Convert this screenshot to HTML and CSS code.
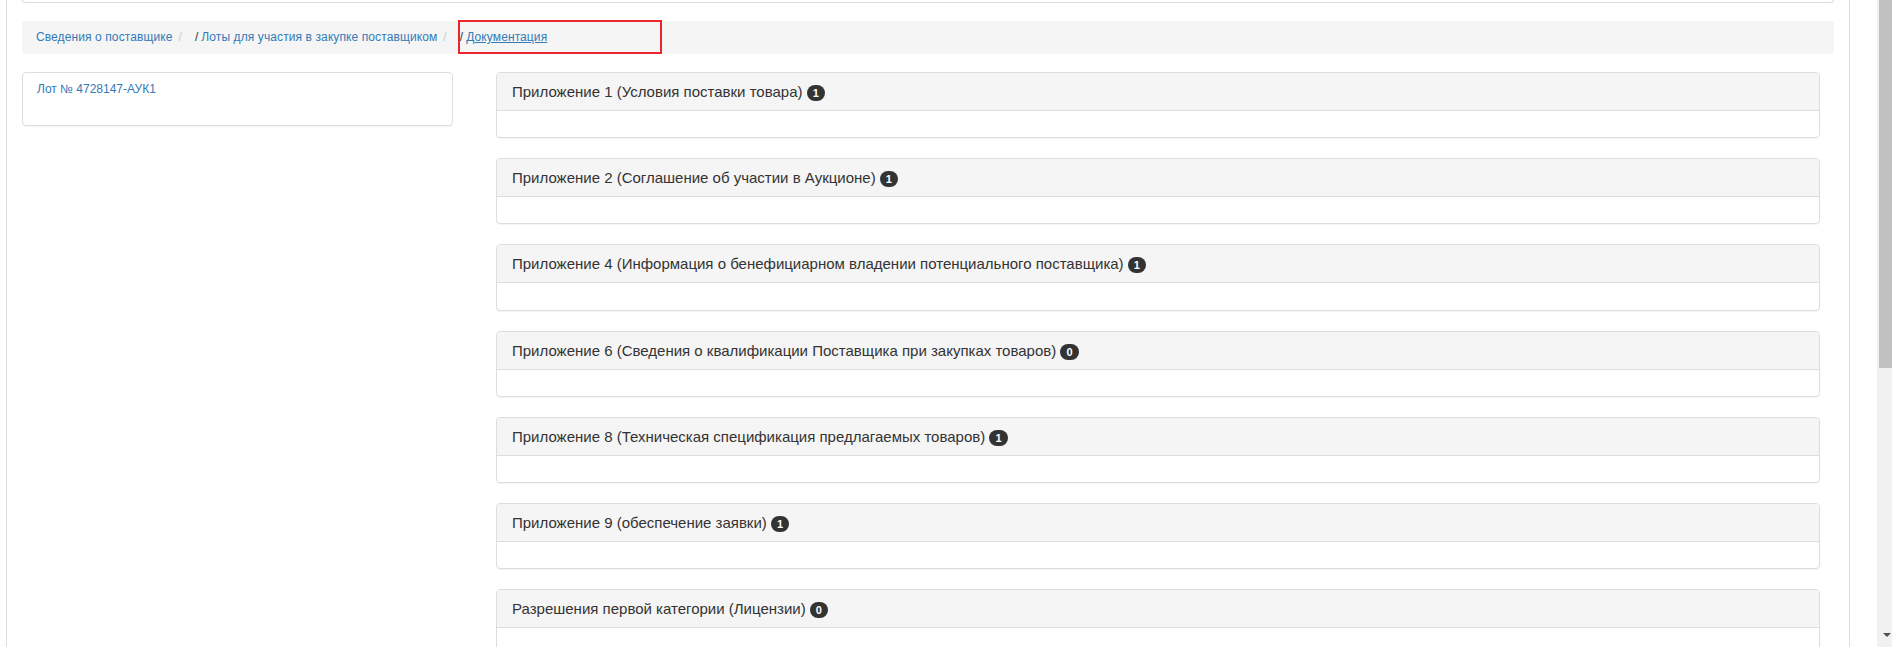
FILE: index.html
```html
<!DOCTYPE html>
<html lang="ru">
<head>
<meta charset="utf-8">
<title>Документация</title>
<link rel="stylesheet" href="styles.css">
</head>
<body>
<div class="page">
  <main class="viewport">
    <div class="container">
      <div class="top-card"></div>
      <nav class="breadcrumb">
        <a class="crumb-link" href="#">Сведения о поставщике</a>
        <span class="crumb-sep">/</span>
        <span class="crumb-slash">/</span>
        <a class="crumb-link" href="#">Лоты для участия в закупке поставщиком</a>
        <span class="crumb-sep">/</span>
        <span class="crumb-slash">/</span>
        <a class="crumb-link crumb-current" href="#">Документация</a>
        <span class="highlight"></span>
      </nav>
      <div class="row">
        <aside class="col-left">
          <div class="lot-card"><a class="lot-link" href="#">Лот № 4728147-АУК1</a></div>
        </aside>
        <section class="col-right">
          <div class="panel">
            <div class="panel-heading">Приложение 1 (Условия поставки товара) <span class="badge">1</span></div>
            <div class="panel-body"></div>
          </div>
          <div class="panel">
            <div class="panel-heading">Приложение 2 (Соглашение об участии в Аукционе) <span class="badge">1</span></div>
            <div class="panel-body"></div>
          </div>
          <div class="panel">
            <div class="panel-heading">Приложение 4 (Информация о бенефициарном владении потенциального поставщика) <span class="badge">1</span></div>
            <div class="panel-body"></div>
          </div>
          <div class="panel">
            <div class="panel-heading">Приложение 6 (Сведения о квалификации Поставщика при закупках товаров) <span class="badge">0</span></div>
            <div class="panel-body"></div>
          </div>
          <div class="panel">
            <div class="panel-heading">Приложение 8 (Техническая спецификация предлагаемых товаров) <span class="badge">1</span></div>
            <div class="panel-body"></div>
          </div>
          <div class="panel">
            <div class="panel-heading">Приложение 9 (обеспечение заявки) <span class="badge">1</span></div>
            <div class="panel-body"></div>
          </div>
          <div class="panel">
            <div class="panel-heading">Разрешения первой категории (Лицензии) <span class="badge">0</span></div>
            <div class="panel-body"></div>
          </div>
        </section>
      </div>
    </div>
  </main>
  <div class="scrollbar">
    <div class="thumb"></div>
    <div class="track"></div>
    <svg class="arrow" width="15" height="17" viewBox="0 0 15 17"><polygon points="6,3 14,3 10,7" fill="#505050"/></svg>
  </div>
</div>
</body>
</html>
```
FILE: styles.css
```css
html, body {
  margin: 0;
  padding: 0;
  height: 647px;
  overflow: hidden;
  background: #fff;
  font-family: "Liberation Sans", Arial, sans-serif;
  color: #333;
}

.page {
  display: flex;
  height: 647px;
}

.viewport {
  flex: 0 0 1877px;
  overflow: hidden;
}

.container {
  margin-left: 6px;
  width: 1844px;
  box-sizing: border-box;
  border-left: 1px solid #ddd;
  border-right: 1px solid #ddd;
  padding: 0 15px;
  min-height: 700px;
}

.top-card {
  height: 2px;
  border: 1px solid #ddd;
  border-top: 0;
  border-radius: 0 0 4px 4px;
}

.breadcrumb {
  position: relative;
  display: flex;
  align-items: baseline;
  margin-top: 18px;
  margin-bottom: 18px;
  padding: 8px 14px;
  background: #f5f5f5;
  border-radius: 4px;
  font-size: 12px;
  letter-spacing: 0.1px;
  line-height: 17px;
}

.crumb-link {
  color: #337ab7;
  text-decoration: none;
}

.crumb-current {
  text-decoration: underline;
}

.crumb-sep {
  color: #ccc;
  margin-left: 6px;
}

.crumb-slash {
  color: #333;
  margin-left: 13px;
  margin-right: 3px;
}

.highlight {
  position: absolute;
  left: 436px;
  top: -1px;
  width: 204px;
  height: 34px;
  box-sizing: border-box;
  border: 2px solid #e8262b;
}

.row {
  display: flex;
  gap: 43px;
  align-items: flex-start;
}

.col-left {
  flex: 0 0 431px;
}

.col-right {
  flex: 0 0 1324px;
}

.lot-card {
  height: 54px;
  box-sizing: border-box;
  border: 1px solid #ddd;
  border-radius: 4px;
  padding: 8px 14px;
  font-size: 12px;
  line-height: 17px;
  box-shadow: 0 1px 1px rgba(0, 0, 0, 0.05);
}

.lot-link {
  color: #337ab7;
  text-decoration: none;
}

.panel {
  border: 1px solid #ddd;
  border-radius: 4px;
  margin-bottom: 20px;
  box-shadow: 0 1px 1px rgba(0, 0, 0, 0.05);
}

.panel-heading {
  height: 17px;
  background: #f5f5f5;
  padding: 10px 15px;
  border-bottom: 1px solid #ddd;
  border-radius: 3px 3px 0 0;
  font-size: 15px;
  line-height: 17px;
  color: #333;
}

.panel-body {
  height: 26.2px;
}

.badge {
  display: inline-block;
  vertical-align: middle;
  margin: -3px 0;
  background: #333;
  color: #fff;
  font-size: 11px;
  font-weight: bold;
  line-height: 10px;
  padding: 3px 6px;
  border-radius: 8px;
}

.scrollbar {
  flex: 0 0 15px;
  display: flex;
  flex-direction: column;
  background: #f1f1f1;
}

.thumb {
  height: 368px;
  margin-left: 2px;
  background: #c1c1c1;
}

.track {
  flex: 1;
}

.arrow {
  display: block;
  flex: 0 0 17px;
}
```
